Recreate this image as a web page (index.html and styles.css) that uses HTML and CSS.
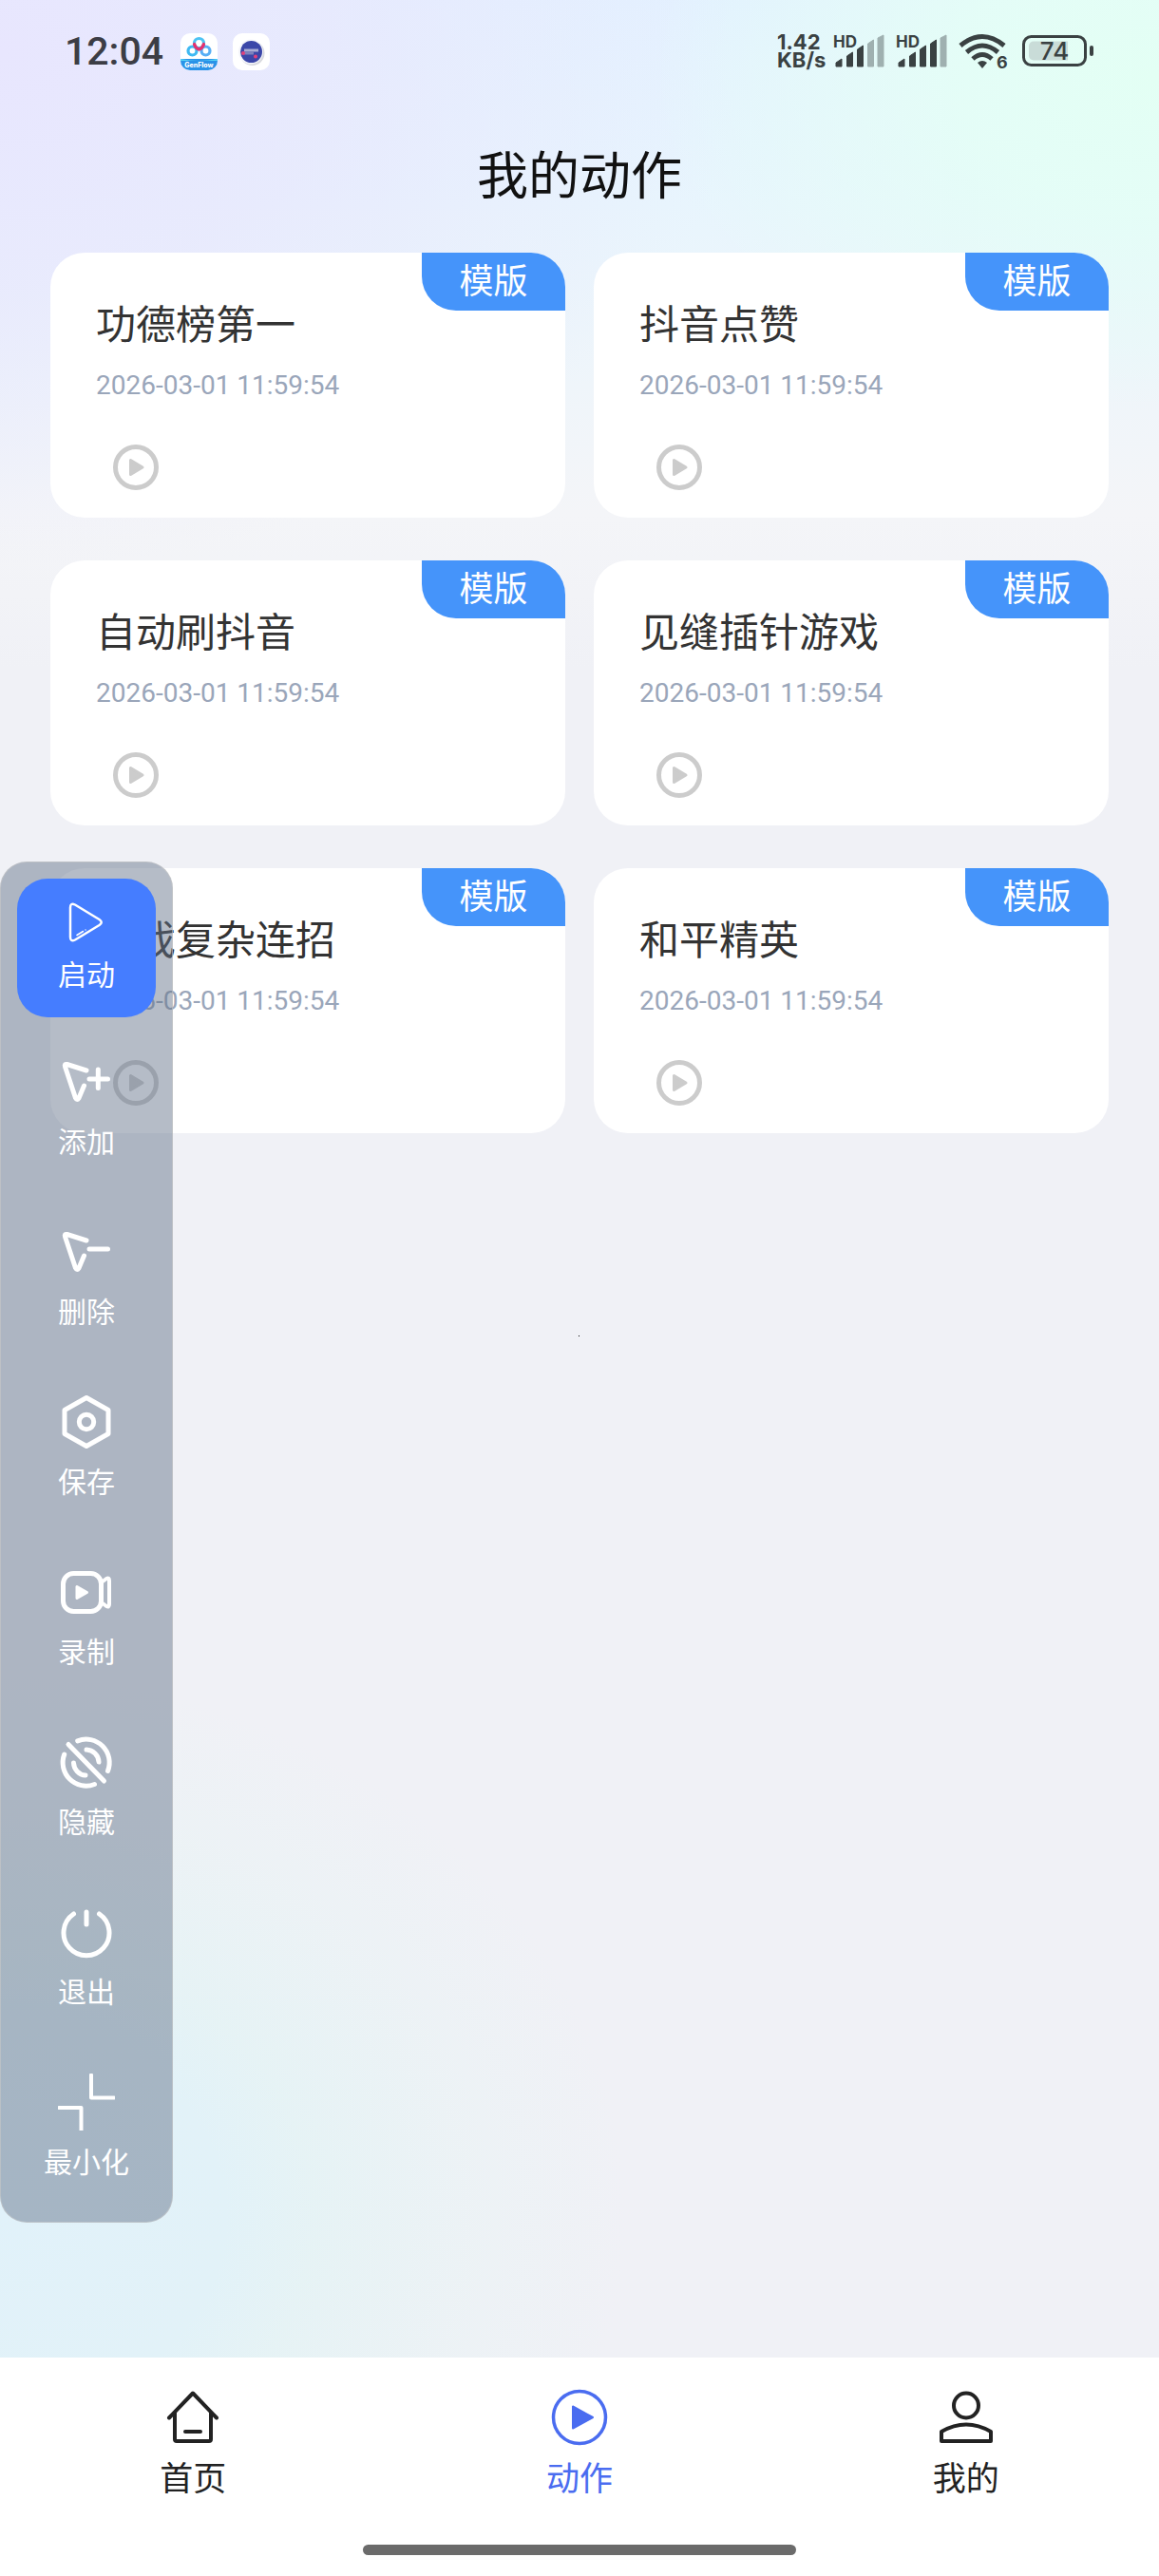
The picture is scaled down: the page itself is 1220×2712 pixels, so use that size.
FILE: index.html
```html
<!DOCTYPE html>
<html lang="zh-CN">
<head>
<meta charset="utf-8">
<meta name="viewport" content="width=device-width, initial-scale=1">
<title>我的动作</title>
<link rel="stylesheet" href="styles.css">
</head>
<body>
<svg class="defs" aria-hidden="true">
  <symbol id="play" viewBox="0 0 48 48">
    <circle cx="24" cy="24" r="21.500" fill="none" stroke="currentColor" stroke-width="5"/>
    <path d="M18.500 16.500v15L31 24z" fill="currentColor" stroke="currentColor" stroke-width="3" stroke-linejoin="round"/>
  </symbol>
  <symbol id="cursor" viewBox="0 0 60 60">
    <path d="M30 18 9.500 11.500Q6.500 11 7.500 14L18.500 47Q20 50 22 47L27.500 34"/>
  </symbol>
</svg>

<div class="statusbar">
  <div class="status-left">
    <span class="clock">12:04</span>
    <svg class="app-icon" viewBox="0 0 39 39" role="img" aria-label="GenFlow">
      <rect width="39" height="39" rx="10" fill="#fff"/>
      <path d="M0 27h39v2a10 10 0 0 1-10 10H10A10 10 0 0 1 0 29z" fill="#2a93e8"/>
      <path d="M0 27q19 4 39 0v2H0z" fill="#56d3f5"/>
      <g fill="none" stroke-width="3.200" stroke-linecap="round">
        <circle cx="12.500" cy="18.500" r="4.500" stroke="#3fb9f2"/>
        <circle cx="26.500" cy="18.500" r="4.500" stroke="#58aef5"/>
        <circle cx="19.500" cy="10.500" r="5" stroke="#4cc3f3"/>
        <path d="M14.500 11.500q1 4 5 5.500 4-1.500 5-5.500" stroke="#e5306f"/>
      </g>
      <text x="19.500" y="36" text-anchor="middle" class="app-name">GenFlow</text>
    </svg>
    <svg class="app-icon" viewBox="0 0 39 39" aria-hidden="true">
      <rect width="39" height="39" rx="10" fill="#fff"/>
      <circle cx="20.500" cy="21" r="13" fill="#d8d9de"/>
      <circle cx="19" cy="19.500" r="13" fill="#f4f5fa"/>
      <circle cx="19.500" cy="19.500" r="11.500" fill="#3b47a8"/>
      <path d="M12 16.500h15v3H12z" fill="#a9acd4"/>
      <path d="M12 19.500h10v3H12z" fill="#7d82bd"/>
      <circle cx="11" cy="21" r="2" fill="#e0407c"/>
      <circle cx="24" cy="24.500" r="2" fill="#e0407c"/>
    </svg>
  </div>
  <div class="status-right">
    <span class="speed">1.42<br>KB/s</span>
    <svg class="signal" viewBox="0 0 54 36" aria-label="HD">
      <text x="0" y="14" class="hd">HD</text>
      <path d="M3 34v-4l6-4v8zM14.500 34V23l6-4v15zM25.500 34V16l6-4v22z" fill="#3a4142" stroke="#3a4142" stroke-linejoin="round"/>
      <path d="M36.500 34V10l6-4v28zM47 34V4l6-3v33z" fill="#9fb0b0" stroke="#9fb0b0" stroke-linejoin="round"/>
    </svg>
    <svg class="signal" viewBox="0 0 54 36" aria-label="HD">
      <text x="0" y="14" class="hd">HD</text>
      <path d="M3 34v-4l6-4v8zM14.500 34V23l6-4v15zM25.500 34V16l6-4v22zM36.500 34V10l6-4v28z" fill="#3a4142" stroke="#3a4142" stroke-linejoin="round"/>
      <path d="M47 34V4l6-3v33z" fill="#9fb0b0" stroke="#9fb0b0" stroke-linejoin="round"/>
    </svg>
    <svg class="wifi" viewBox="0 0 52 38" aria-hidden="true">
      <g fill="none" stroke="#3a4142" stroke-width="5">
        <path d="M2 13Q25 -6 48 13"/>
        <path d="M8.500 20Q25 6 41.500 20"/>
        <path d="M15 27Q25 18 35 27"/>
      </g>
      <path d="M20 31q5-4 10 0l-5 6z" fill="#3a4142"/>
      <text x="40" y="37" class="wifi-gen">6</text>
    </svg>
    <svg class="battery" viewBox="0 0 76 34" aria-hidden="true">
      <rect x="1.500" y="1.500" width="65" height="30" rx="8" fill="none" stroke="#3a4142" stroke-width="3"/>
      <path d="M12 6.500h36v20H12a5 5 0 0 1-5-5v-10a5 5 0 0 1 5-5z" fill="#c9dcd8"/>
      <rect x="71" y="11" width="4" height="11" rx="2" fill="#3a4142"/>
      <text x="34" y="26" text-anchor="middle" class="level">74</text>
    </svg>
  </div>
</div>

<header class="header"><h1>我的动作</h1></header>

<main class="grid">
  <article class="card">
    <span class="tag">模版</span>
    <h2>功德榜第一</h2>
    <time>2026-03-01 11:59:54</time>
    <button class="play" type="button" aria-label="播放"><svg><use href="#play"/></svg></button>
  </article>
  <article class="card">
    <span class="tag">模版</span>
    <h2>抖音点赞</h2>
    <time>2026-03-01 11:59:54</time>
    <button class="play" type="button" aria-label="播放"><svg><use href="#play"/></svg></button>
  </article>
  <article class="card">
    <span class="tag">模版</span>
    <h2>自动刷抖音</h2>
    <time>2026-03-01 11:59:54</time>
    <button class="play" type="button" aria-label="播放"><svg><use href="#play"/></svg></button>
  </article>
  <article class="card">
    <span class="tag">模版</span>
    <h2>见缝插针游戏</h2>
    <time>2026-03-01 11:59:54</time>
    <button class="play" type="button" aria-label="播放"><svg><use href="#play"/></svg></button>
  </article>
  <article class="card">
    <span class="tag">模版</span>
    <h2>游戏复杂连招</h2>
    <time>2026-03-01 11:59:54</time>
    <button class="play" type="button" aria-label="播放"><svg><use href="#play"/></svg></button>
  </article>
  <article class="card">
    <span class="tag">模版</span>
    <h2>和平精英</h2>
    <time>2026-03-01 11:59:54</time>
    <button class="play" type="button" aria-label="播放"><svg><use href="#play"/></svg></button>
  </article>
</main>

<span class="dot"></span>

<aside class="toolbar">
  <button class="tool tool-start" type="button">
    <svg viewBox="0 0 60 60" stroke-width="2.500">
      <path d="M13 14.500Q13 9 18 11.500L43.500 27Q48 30 43.500 33L18 48.500Q13 51 13 45.500z"/>
      <path d="M20 43.500 26.500 39.500M29 38v0" stroke-width="1.500"/>
    </svg>
    <span>启动</span>
  </button>
  <button class="tool" type="button">
    <svg viewBox="0 0 60 60"><use href="#cursor"/><path d="M33 27H52.500M42.300 17V36.500"/></svg>
    <span>添加</span>
  </button>
  <button class="tool" type="button">
    <svg viewBox="0 0 60 60"><use href="#cursor"/><path d="M33 27H52.500"/></svg>
    <span>删除</span>
  </button>
  <button class="tool" type="button">
    <svg viewBox="0 0 60 60"><path d="M30 4.500 53 17.500V42.500L30 55.500 7 42.500V17.500z"/><circle cx="30" cy="30" r="7.700"/></svg>
    <span>保存</span>
  </button>
  <button class="tool" type="button">
    <svg viewBox="0 0 60 60">
      <rect x="5.500" y="10.500" width="40" height="40" rx="11"/>
      <path d="M20 24.500v12L30.500 30.500z" fill="currentColor" stroke-width="3"/>
      <path d="M47 19 51 16Q54 14.500 54 18V43Q54 46.500 51 45L47 42" stroke-width="4"/>
    </svg>
    <span>录制</span>
  </button>
  <button class="tool" type="button">
    <svg viewBox="0 0 60 60">
      <path d="M20.700 7.800A24.500 24.500 0 0 1 52.500 39.500M6.700 22A24.500 24.500 0 0 0 38.500 53.500M11 11.500 48.500 50"/>
      <path d="M30 17A13.500 13.500 0 0 1 43 30M16.500 31A13.500 13.500 0 0 0 29 44"/>
    </svg>
    <span>隐藏</span>
  </button>
  <button class="tool" type="button">
    <svg viewBox="0 0 60 60"><path d="M16.500 11A24 24 0 1 0 43.500 11M30 9V22"/></svg>
    <span>退出</span>
  </button>
  <button class="tool" type="button">
    <svg viewBox="0 0 60 60" stroke-width="4"><path d="M35 1.500V25.500H59M1 36H24.500V60"/></svg>
    <span>最小化</span>
  </button>
</aside>

<nav class="tabbar">
  <div class="tabs">
    <a class="tab" href="#home">
      <svg viewBox="0 0 60 60" stroke-width="4"><path d="M5 30.500 30 4.500 55 30.500M11 25V53Q11 55 13 55H47Q49 55 49 53V25M22 45H38"/></svg>
      <span>首页</span>
    </a>
    <a class="tab active" href="#actions" aria-current="page">
      <svg viewBox="0 0 60 60" stroke-width="3.500"><circle cx="30" cy="30" r="27.500"/><path d="M23 18.500V41.500L44 30z" fill="currentColor" stroke-width="2"/></svg>
      <span>动作</span>
    </a>
    <a class="tab" href="#me">
      <svg viewBox="0 0 60 60" stroke-width="4"><circle cx="30" cy="17.500" r="13"/><path d="M4 55V45Q17 37.500 30 37.500T56 45V55z"/></svg>
      <span>我的</span>
    </a>
  </div>
  <div class="home-indicator"></div>
</nav>
</body>
</html>
```
FILE: styles.css
```css
* { box-sizing: border-box; }

body {
  margin: 0;
  min-height: 100vh;
  display: flex;
  flex-direction: column;
  position: relative;
  font-family: Inter, "Noto Sans CJK SC", sans-serif;
  color: #333;
  background:
    radial-gradient(ellipse 54% 21% at 0 86%, #e1f2fa 0, #e2f2f8 36%, rgba(229, 243, 245, .9) 50%, rgba(234, 243, 245, .6) 75%, rgba(240, 241, 246, 0) 100%),
    radial-gradient(ellipse 44% 13% at 100% 3%, #e3fff4 0, rgba(228, 254, 246, .9) 40%, rgba(232, 248, 252, 0) 100%),
    radial-gradient(ellipse 64% 20% at 0 2%, #e8e6fe 0, rgba(232, 232, 253, .8) 45%, rgba(236, 238, 250, 0) 100%),
    linear-gradient(#e3f1ff 0, #e8f5fd 8%, #f4f5f8 20%, #f0f1f6 26%);
}

button {
  border: 0;
  padding: 0;
  background: none;
  color: inherit;
  font: inherit;
}

svg { display: block; }
.defs { position: absolute; width: 0; height: 0; }

/* status bar */
.statusbar {
  display: flex;
  justify-content: space-between;
  align-items: center;
  height: 108px;
  padding: 0 68px;
  color: #3a4142;
}
.status-left { display: flex; align-items: center; gap: 16px; }
.clock { width: 106px; font-family: Roboto, sans-serif; font-size: 41px; font-weight: 500; line-height: 48px; color: #3c3d45; }
.app-icon { width: 39px; height: 39px; }
.app-name { font: 800 7px Inter, sans-serif; fill: #fff; }
.status-right { display: flex; align-items: center; gap: 12px; }
.speed { width: 47px; font-size: 22px; font-weight: 700; line-height: 19px; white-space: nowrap; }
.signal { width: 54px; height: 36px; overflow: visible; }
.hd { font: 700 17px Inter, sans-serif; fill: #3a4142; }
.wifi { width: 52px; height: 38px; margin-right: 3px; overflow: visible; }
.wifi-gen { font: 700 18px Inter, sans-serif; fill: #3a4142; }
.battery { width: 76px; height: 34px; }
.level { font: 500 26px Inter, sans-serif; fill: #3a4142; }

/* page title */
.header { padding: 42px 0 44px; text-align: center; }
.header h1 { margin: 0; font-size: 54px; line-height: 72px; font-weight: 400; color: #111; }

/* action cards */
.grid {
  display: grid;
  grid-template-columns: 1fr 1fr;
  gap: 45px 30px;
  padding: 0 53px;
}
.card {
  position: relative;
  display: flex;
  flex-direction: column;
  align-items: flex-start;
  padding: 51px 48px 29px;
  border-radius: 36px;
  background: #fff;
}
.card h2 { margin: 0; font-size: 42px; line-height: 50px; font-weight: 400; }
.card time { margin-top: 21px; font-family: Roboto, sans-serif; font-size: 28px; line-height: 36px; color: #9aa6ba; }
.tag {
  position: absolute;
  top: 0;
  right: 0;
  width: 151px;
  border-radius: 0 36px 0 36px;
  background: #4594fa;
  color: #fff;
  font-size: 36px;
  line-height: 61px;
  text-align: center;
}
.play { margin: 44px 0 0 18px; color: #ccc; }
.play svg { width: 48px; height: 48px; }

.dot { position: absolute; left: 609px; top: 1406px; width: 1px; height: 1px; background: #000; }

/* floating tool panel */
.toolbar {
  position: absolute;
  left: 0;
  top: 907px;
  width: 182px;
  display: flex;
  flex-direction: column;
  align-items: center;
  gap: 66px;
  padding: 17px 0 43px;
  border: 1px solid rgba(200, 200, 200, .6);
  border-radius: 28px;
  background: rgba(97, 113, 135, .47);
  color: #fff;
}
.tool {
  display: flex;
  flex-direction: column;
  align-items: center;
  gap: 13px;
  font-size: 30px;
  line-height: 40px;
}
.tool svg,
.tab svg {
  width: 60px;
  height: 60px;
  fill: none;
  stroke: currentColor;
  stroke-linecap: round;
  stroke-linejoin: round;
}
.tool svg:not([stroke-width]) { stroke-width: 5px; }
.tool-start {
  width: 146px;
  height: 146px;
  margin-bottom: -28px;
  gap: 5px;
  padding-top: 16px;
  border-radius: 32px;
  background: #457dff;
}

/* bottom navigation */
.tabbar { margin-top: auto; padding: 33px 0 22px; background: #fff; }
.tabs { display: grid; grid-template-columns: repeat(3, 1fr); }
.tab {
  display: flex;
  flex-direction: column;
  align-items: center;
  gap: 10px;
  color: #222;
  font-size: 35px;
  line-height: 48px;
  text-decoration: none;
}
.tab.active { color: #4a6cf0; }
.home-indicator {
  width: 456px;
  height: 11px;
  margin: 46px auto 0;
  border-radius: 6px;
  background: #6b6b6b;
}
```
